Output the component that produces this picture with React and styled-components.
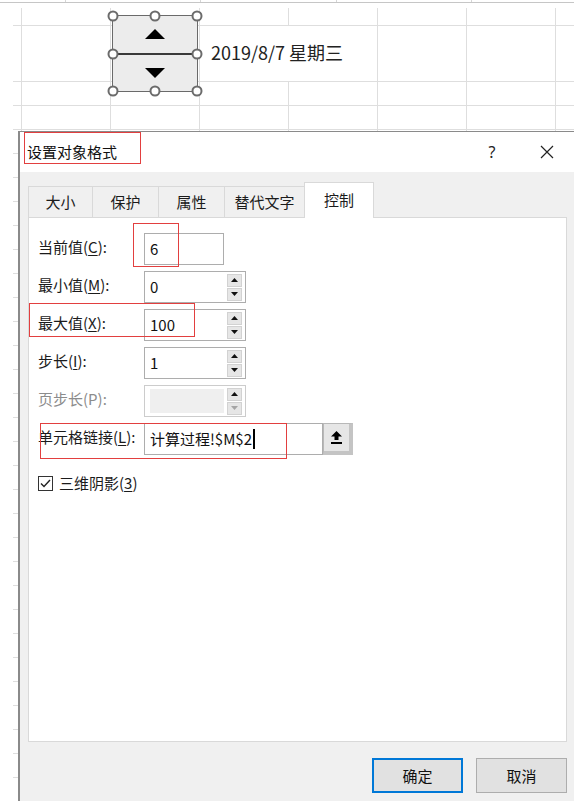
import styled, { createGlobalStyle } from "styled-components";

const GlobalStyle = createGlobalStyle`
  html, body {
    margin: 0;
    padding: 0;
    background: #fff;
  }
  body {
    font-family: "Noto Sans CJK SC", "Noto Sans", sans-serif;
    line-height: 1.3;
    color: #1b1b1b;
  }
`;

const Page = styled.div`
  position: relative;
  width: 574px;
  height: 801px;
  overflow: hidden;
  background: #fff;
`;

/* ---------- spreadsheet behind ---------- */

const Sheet = styled.div`
  display: flex;
  flex-direction: column;
`;

const HeaderStrip = styled.div`
  display: flex;
  height: 2px;
  border-bottom: 1px solid #c6c6c6;
  margin-bottom: 5px;
`;

const HeaderTick = styled.div`
  flex: 0 0 ${(p) => p.$w}px;
  box-sizing: border-box;
  border-right: 1px solid #d6d6d6;
`;

const SheetRow = styled.div`
  display: grid;
  grid-template-columns: 9px repeat(7, 89px);
  margin-left: 13px;
  height: ${(p) => p.$h}px;
  box-sizing: border-box;
  border-bottom: 1px solid #dedede;
`;

const Cell = styled.div`
  box-sizing: border-box;
  border-right: 1px solid #dedede;
`;

const DateCell = styled.div`
  grid-column: span 2;
  box-sizing: border-box;
  border-right: 1px solid #dedede;
  display: flex;
  align-items: center;
  padding-left: 11px;
  padding-bottom: 2px;
  font-size: 18px;
  white-space: nowrap;
  color: #222;
`;

/* ---------- spin button object on the sheet ---------- */

const SpinObject = styled.div`
  position: absolute;
  left: 112px;
  top: 15px;
  width: 86px;
  height: 77px;
  box-sizing: border-box;
  border: 1.5px solid #6a6a6a;
  background: #ececec;
  display: flex;
  flex-direction: column;
`;

const SpinHalf = styled.div`
  flex: 1;
  display: flex;
  align-items: center;
  justify-content: center;
  & + & {
    border-top: 2px solid #3a3a3a;
  }
`;

const Handle = styled.span`
  position: absolute;
  left: ${(p) => p.$x};
  top: ${(p) => p.$y};
  width: 11px;
  height: 11px;
  box-sizing: border-box;
  border-radius: 50%;
  border: 2px solid #6b6b6b;
  background: #fff;
  transform: translate(-50%, -50%);
`;

/* ---------- dialog ---------- */

const Dialog = styled.div`
  position: absolute;
  left: 18px;
  top: 131px;
  width: 590px;
  bottom: -20px;
  border-left: 2px solid #8a8a8a;
  border-top: 1px solid #8a8a8a;
  background: #f0f0f0;
  display: flex;
  flex-direction: column;
`;

const TitleBar = styled.div`
  height: 40px;
  flex: none;
  display: flex;
  align-items: center;
  background: #fff;
  padding-left: 7px;
`;

const Title = styled.div`
  font-size: 15px;
  color: #111;
`;

const TitleButton = styled.div`
  width: 46px;
  height: 40px;
  display: flex;
  align-items: center;
  justify-content: center;
  font-family: "Noto Sans", sans-serif;
  font-size: 16px;
  color: #222;
  margin-left: ${(p) => p.$ml || 0}px;
`;

const Body = styled.div`
  padding: 10px 0 0 8px;
  display: flex;
  flex-direction: column;
`;

const TabStrip = styled.div`
  display: flex;
  align-items: flex-end;
  height: 35px;
`;

const Tab = styled.div`
  position: relative;
  z-index: ${(p) => (p.$active ? 2 : 1)};
  width: ${(p) => p.$w}px;
  height: ${(p) => (p.$active ? 36 : 31)}px;
  margin-bottom: ${(p) => (p.$active ? -1 : 0)}px;
  margin-right: -1px;
  box-sizing: border-box;
  border: 1px solid #d9d9d9;
  border-bottom: none;
  background: ${(p) => (p.$active ? "#fff" : "#f0f0f0")};
  display: flex;
  align-items: center;
  justify-content: center;
  padding-bottom: ${(p) => (p.$active ? 2 : 0)}px;
  font-size: 15px;
  color: #1b1b1b;
`;

const Panel = styled.div`
  width: 539px;
  height: 525px;
  box-sizing: border-box;
  border: 1px solid #d9d9d9;
  background: #fff;
  padding: 15px 0 0 9px;
  display: flex;
  flex-direction: column;
`;

const FieldRow = styled.div`
  display: flex;
  align-items: center;
  height: 32px;
  margin-bottom: 6px;
`;

const FieldLabel = styled.div`
  width: 106px;
  flex: none;
  font-size: 15px;
  padding-bottom: 4px;
  color: ${(p) => (p.$disabled ? "#8c8c8c" : "#1b1b1b")};
  u {
    text-decoration-thickness: 1px;
    text-underline-offset: 2px;
  }
`;

const InputBox = styled.div`
  width: ${(p) => p.$w}px;
  height: 32px;
  flex: none;
  box-sizing: border-box;
  border: 1px solid ${(p) => (p.$disabled ? "#cccccc" : "#adadad")};
  background: #fff;
  display: flex;
  align-items: center;
  padding: 0 3px 0 5px;
  font-size: 15px;
  color: #111;
`;

const Value = styled.div`
  flex: 1;
  align-self: stretch;
  display: flex;
  align-items: center;
  background: ${(p) => (p.$disabled ? "#efefef" : "transparent")};
  margin: ${(p) => (p.$disabled ? "3px 3px 3px 0" : "0")};
  white-space: nowrap;
`;

const SpinCol = styled.div`
  display: flex;
  flex-direction: column;
  gap: 1px;
`;

const SpinBtn = styled.div`
  width: 15px;
  height: 13px;
  box-sizing: border-box;
  border: 1px solid #d2d2d2;
  background: #e6e6e6;
  display: flex;
  align-items: center;
  justify-content: center;
`;

const Caret = styled.span`
  display: inline-block;
  width: 1.5px;
  height: 20px;
  background: #000;
  margin-left: 1px;
`;

const PickButton = styled.div`
  width: 30px;
  height: 32px;
  flex: none;
  box-sizing: border-box;
  border: 1px solid #b8b8b8;
  border-right: 4px solid #c4c4c4;
  border-bottom: 4px solid #c4c4c4;
  background: #e6e6e6;
  display: flex;
  align-items: center;
  justify-content: center;
`;

const CheckRow = styled.div`
  display: flex;
  align-items: center;
  gap: 6px;
  height: 20px;
  margin-top: 12px;
  font-size: 15px;
  u {
    text-decoration-thickness: 1px;
    text-underline-offset: 2px;
  }
`;

const CheckBox = styled.div`
  width: 15px;
  height: 15px;
  box-sizing: border-box;
  border: 1px solid #333;
  background: #fff;
  display: flex;
  align-items: center;
  justify-content: center;
`;

const Footer = styled.div`
  width: 539px;
  display: flex;
  justify-content: flex-end;
  gap: 13px;
  padding-top: 16px;
`;

const Button = styled.div`
  width: 91px;
  height: 35px;
  box-sizing: border-box;
  border: ${(p) => (p.$primary ? "2px solid #0078d7" : "1px solid #adadad")};
  background: #e1e1e1;
  display: flex;
  align-items: center;
  justify-content: center;
  font-size: 15px;
  color: #111;
`;

/* ---------- red annotation boxes ---------- */

const Mark = styled.div`
  position: absolute;
  left: ${(p) => p.$x}px;
  top: ${(p) => p.$y}px;
  width: ${(p) => p.$w}px;
  height: ${(p) => p.$h}px;
  box-sizing: border-box;
  border: 1.5px solid #e23f3f;
  pointer-events: none;
`;

/* ---------- icons ---------- */

const BigTri = ({ down }) => (
  <svg width="20" height="10" viewBox="0 0 20 10">
    <path d={down ? "M0 0 H20 L10 10 Z" : "M0 10 H20 L10 0 Z"} fill="#000" />
  </svg>
);

const SmallTri = ({ down, color = "#111" }) => (
  <svg width="7" height="4" viewBox="0 0 7 4">
    <path d={down ? "M0 0 H7 L3.5 4 Z" : "M0 4 H7 L3.5 0 Z"} fill={color} />
  </svg>
);

const CloseIcon = () => (
  <svg width="14" height="14" viewBox="0 0 14 14">
    <path d="M1 1 L13 13 M13 1 L1 13" stroke="#222" strokeWidth="1.2" />
  </svg>
);

const PickIcon = () => (
  <svg width="11" height="13" viewBox="0 0 11 13">
    <path d="M5.5 0 L11 5.5 H7.5 V9 H3.5 V5.5 H0 Z" fill="#000" />
    <rect x="0" y="11" width="11" height="2" fill="#000" />
  </svg>
);

const CheckMark = () => (
  <svg width="11" height="9" viewBox="0 0 11 9">
    <path d="M1 4.5 L4 7.5 L10 1" fill="none" stroke="#222" strokeWidth="1.4" />
  </svg>
);

/* ---------- data ---------- */

const headerTicks = [66, 135, 136, 135, 200];
const rowHeights = [18, 56, ...Array.from({ length: 30 }, () => 24)];

const tabs = [
  { text: "大小", w: 65 },
  { text: "保护", w: 67 },
  { text: "属性", w: 67 },
  { text: "替代文字", w: 81 },
  { text: "控制", w: 70, active: true },
];

const fields = [
  { label: "当前值", key: "C", value: "6", w: 80 },
  { label: "最小值", key: "M", value: "0", w: 102, spin: true },
  { label: "最大值", key: "X", value: "100", w: 102, spin: true },
  { label: "步长", key: "I", value: "1", w: 102, spin: true },
  { label: "页步长", key: "P", value: "", w: 102, spin: true, disabled: true },
];

const handles = [
  ["0%", "0%"], ["50%", "0%"], ["100%", "0%"],
  ["0%", "50%"], ["100%", "50%"],
  ["0%", "100%"], ["50%", "100%"], ["100%", "100%"],
];

export default function App() {
  return (
    <Page>
      <GlobalStyle />
      <Sheet>
        <HeaderStrip>
          {headerTicks.map((w, i) => (
            <HeaderTick key={i} $w={w} />
          ))}
        </HeaderStrip>
        {rowHeights.map((h, r) => (
          <SheetRow key={r} $h={h}>
            {r === 1 ? (
              <>
                <Cell />
                <Cell />
                <Cell />
                <DateCell>2019/8/7 星期三</DateCell>
                <Cell />
                <Cell />
                <Cell />
              </>
            ) : (
              Array.from({ length: 8 }, (_, c) => <Cell key={c} />)
            )}
          </SheetRow>
        ))}
      </Sheet>

      <SpinObject>
        <SpinHalf>
          <BigTri />
        </SpinHalf>
        <SpinHalf>
          <BigTri down />
        </SpinHalf>
        {handles.map(([x, y], i) => (
          <Handle key={i} $x={x} $y={y} />
        ))}
      </SpinObject>

      <Dialog>
        <TitleBar>
          <Title>设置对象格式</Title>
          <TitleButton $ml={352}>?</TitleButton>
          <TitleButton $ml={9}>
            <CloseIcon />
          </TitleButton>
        </TitleBar>

        <Body>
          <TabStrip>
            {tabs.map((t) => (
              <Tab key={t.text} $w={t.w} $active={t.active}>
                {t.text}
              </Tab>
            ))}
          </TabStrip>

          <Panel>
            {fields.map((f) => (
              <FieldRow key={f.label}>
                <FieldLabel $disabled={f.disabled}>
                  {f.label}(
                  {f.disabled ? f.key : <u>{f.key}</u>}):
                </FieldLabel>
                <InputBox $w={f.w} $disabled={f.disabled}>
                  <Value $disabled={f.disabled}>{f.value}</Value>
                  {f.spin && (
                    <SpinCol>
                      <SpinBtn>
                        <SmallTri />
                      </SpinBtn>
                      <SpinBtn>
                        <SmallTri down color={f.disabled ? "#a5a5a5" : "#111"} />
                      </SpinBtn>
                    </SpinCol>
                  )}
                </InputBox>
              </FieldRow>
            ))}

            <FieldRow>
              <FieldLabel>
                单元格链接(<u>L</u>):
              </FieldLabel>
              <InputBox $w={179}>
                <Value>
                  计算过程!$M$2
                  <Caret />
                </Value>
              </InputBox>
              <PickButton>
                <PickIcon />
              </PickButton>
            </FieldRow>

            <CheckRow>
              <CheckBox>
                <CheckMark />
              </CheckBox>
              <span>
                三维阴影(<u>3</u>)
              </span>
            </CheckRow>
          </Panel>

          <Footer>
            <Button $primary>确定</Button>
            <Button>取消</Button>
          </Footer>
        </Body>
      </Dialog>

      <Mark $x={24} $y={132} $w={117} $h={32} />
      <Mark $x={133} $y={223} $w={46} $h={44} />
      <Mark $x={29} $y={303} $w={166} $h={34} />
      <Mark $x={40} $y={423} $w={247} $h={36} />
    </Page>
  );
}
